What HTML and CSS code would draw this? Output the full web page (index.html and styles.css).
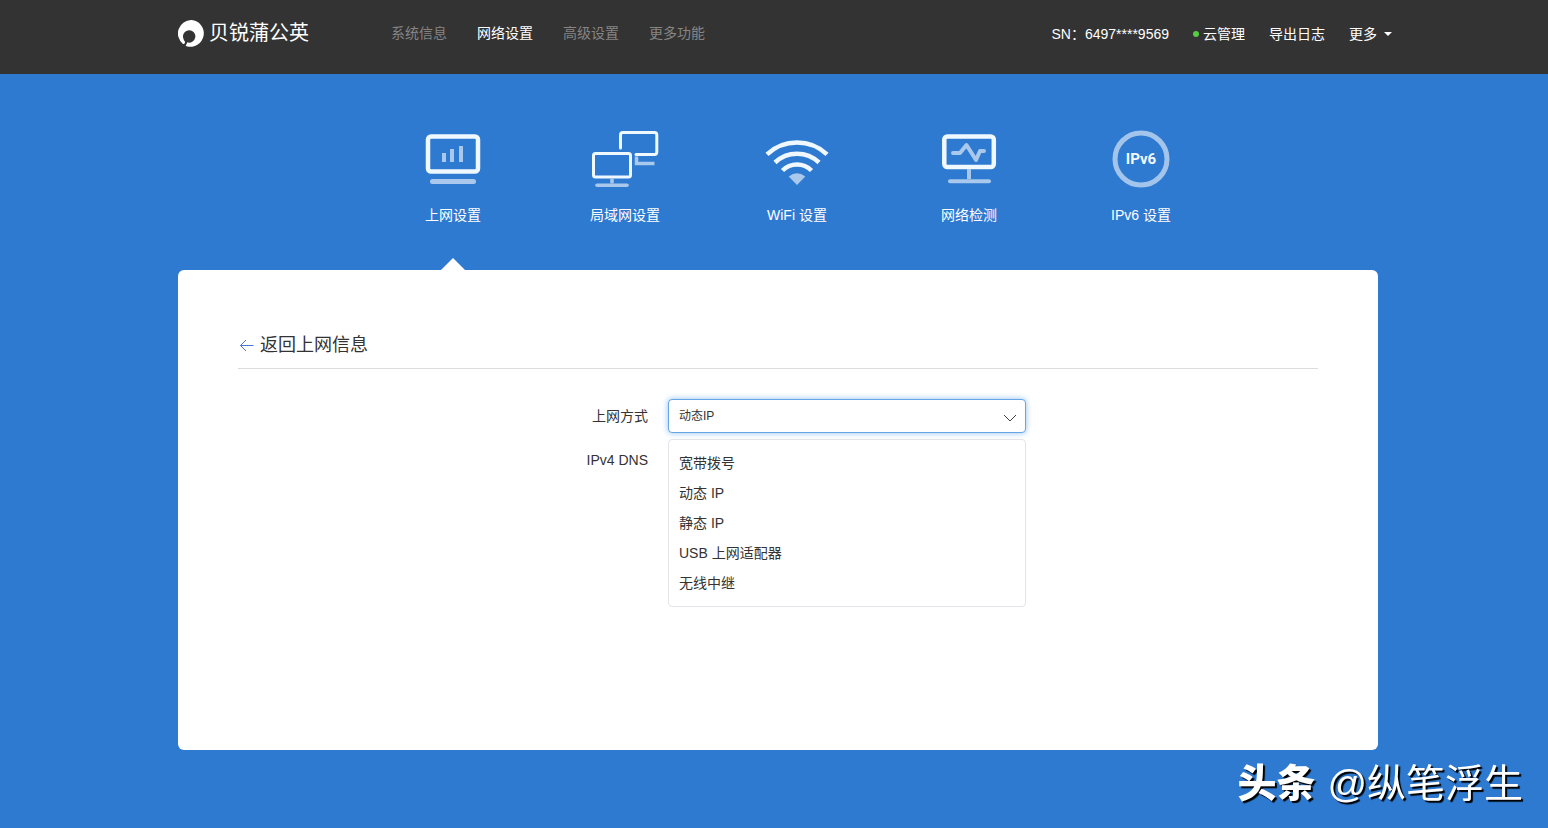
FILE: index.html
```html
<!DOCTYPE html>
<html lang="zh-CN">
<head>
<meta charset="utf-8">
<title>网络设置</title>
<link rel="stylesheet" href="styles.css">
</head>
<body>
<header class="topbar">
  <div class="container topbar-inner">
    <a class="brand" href="#">
      <svg class="brand-mark" viewBox="0 0 27 27" aria-hidden="true">
        <path fill="#fff" d="M13.5 0A13.4 13.4 0 1 1 8.600 26.200Q7 25.400 8.300 24.400Q9.300 23.200 9 22.200A6.200 6.200 0 1 0 5.200 18Q5.700 20.400 7 21.800Q7.200 24.300 5 23.900A13.400 13.400 0 0 1 13.500 0Z"/>
      </svg>
      <span>贝锐蒲公英</span>
    </a>
    <nav class="main-nav">
      <a href="#">系统信息</a>
      <a class="active" href="#">网络设置</a>
      <a href="#">高级设置</a>
      <a href="#">更多功能</a>
    </nav>
    <div class="tools">
      <span>SN：6497****9569</span>
      <a class="cloud" href="#">云管理</a>
      <a href="#">导出日志</a>
      <button class="more" type="button">更多</button>
    </div>
  </div>
</header>
<main class="page">
  <div class="container">
    <nav class="tabs">
      <a class="tab current" href="#">
        <svg viewBox="0 0 72 60" aria-hidden="true">
          <rect x="11" y="6.500" width="50" height="35" rx="3" class="frame" stroke-width="4.500"/>
          <path class="soft" stroke-width="4" d="M27 32v-9M35 32v-13M44 32v-16"/>
          <path class="soft round" stroke-width="5" d="M15.500 51.500h41"/>
        </svg>
        <span>上网设置</span>
      </a>
      <a class="tab" href="#">
        <svg viewBox="0 0 72 60" aria-hidden="true">
          <path class="frame" stroke-width="3" stroke-linecap="round" d="M31.500 18V5Q31.500 2.500 34 2.500H65.500Q67.800 2.500 67.800 5V22Q67.800 24.500 65.500 24.500H47"/>
          <path class="soft" stroke-width="3.500" stroke-linecap="butt" d="M47.500 26.500v7h18"/>
          <rect x="4.500" y="23.500" width="37" height="23.500" rx="2" class="frame" stroke-width="3"/>
          <path class="soft" stroke-width="3.500" d="M23 48.500v5"/>
          <path class="soft round" stroke-width="3.500" d="M8 55.200h30"/>
        </svg>
        <span>局域网设置</span>
      </a>
      <a class="tab" href="#">
        <svg viewBox="0 0 72 60" aria-hidden="true">
          <path class="frame" stroke-width="4.500" d="M6 24.300A44 44 0 0 1 66 24.300M14 32.500A32 32 0 0 1 58 32.500M21.500 40.500A20.500 20.500 0 0 1 50.500 40.500"/>
          <path fill="#a9c8ec" d="M27.700 46.500Q36 40 44.300 46.500L36 55Z"/>
        </svg>
        <span>WiFi 设置</span>
      </a>
      <a class="tab" href="#">
        <svg viewBox="0 0 72 60" aria-hidden="true">
          <rect x="11.300" y="6.500" width="49.500" height="30.500" rx="3" class="frame" stroke-width="4.500"/>
          <path class="soft round" stroke-width="4" d="M20 23h7l6.500-8 9.500 15 4-9h4"/>
          <path class="soft" stroke-width="4" d="M36 39v10"/>
          <path class="soft round" stroke-width="4" d="M17 51.200h39"/>
        </svg>
        <span>网络检测</span>
      </a>
      <a class="tab" href="#">
        <svg viewBox="0 0 72 60" aria-hidden="true">
          <circle cx="36" cy="29" r="26" stroke="#a4c5eb" stroke-width="5"/>
          <text class="badge-text" x="36" y="34" text-anchor="middle">IPv6</text>
        </svg>
        <span>IPv6 设置</span>
      </a>
    </nav>
    <section class="panel">
      <a class="back" href="#">
        <svg viewBox="0 0 16 16" aria-hidden="true"><path d="M15.500 8.500H2.500M8 3L2.500 8.500 8 14"/></svg>
        <span>返回上网信息</span>
      </a>
      <form class="form">
        <label for="mode">上网方式</label>
        <div class="field">
          <select id="mode">
            <option>动态IP</option>
          </select>
          <svg class="chevron" viewBox="0 0 14 8" aria-hidden="true"><path d="M1 1l6 6 6-6"/></svg>
          <ul class="menu" role="listbox" aria-label="上网方式">
            <li role="option">宽带拨号</li>
            <li role="option">动态 IP</li>
            <li role="option">静态 IP</li>
            <li role="option">USB 上网适配器</li>
            <li role="option">无线中继</li>
          </ul>
        </div>
        <span class="label">IPv4 DNS</span>
      </form>
    </section>
  </div>
</main>
<div class="credit"><strong>头条</strong><span>@纵笔浮生</span></div>
</body>
</html>
```

FILE: styles.css
```css
* { box-sizing: border-box; }
body {
  margin: 0;
  min-height: 100vh;
  background: #2e7ad1;
  color: #333;
  font: 14px/20px "Liberation Sans", "Noto Sans CJK SC", sans-serif;
}
a { color: inherit; text-decoration: none; }
.topbar, .page { padding-left: 8px; }
.container { max-width: 1200px; margin: 0 auto; }
.topbar { background: #333; }
.topbar-inner { display: flex; height: 74px; align-items: flex-start; }
.brand {
  display: flex;
  align-items: center;
  gap: 4px;
  width: 213px;
  height: 28px;
  margin-top: 19px;
  color: #fff;
  font-size: 20px;
  white-space: nowrap;
}
.brand-mark { width: 27px; height: 27px; }
.main-nav { display: flex; gap: 30px; margin-top: 23px; color: #858585; }
.main-nav .active { color: #fff; }
.tools {
  display: flex;
  gap: 24px;
  margin: 24px -14px 0 auto;
  color: #fff;
  white-space: nowrap;
}
.cloud { display: flex; align-items: center; gap: 4px; }
.cloud::before {
  content: "";
  width: 6px;
  height: 6px;
  border-radius: 50%;
  background: #5c4;
}
.more {
  display: flex;
  align-items: center;
  gap: 7px;
  padding: 0;
  border: 0;
  background: none;
  color: inherit;
  font: inherit;
}
.more::after {
  content: "";
  border: 4px solid transparent;
  border-top-color: #fff;
  border-bottom: 0;
}
.tabs { display: flex; height: 196px; padding: 56px 0 0 189px; }
.tab {
  display: flex;
  flex-direction: column;
  align-items: center;
  gap: 15px;
  width: 172px;
  position: relative;
  color: #fff;
}
.tab svg { width: 72px; height: 60px; fill: none; }
.current::after {
  content: "";
  position: absolute;
  bottom: 0;
  border: 12px solid transparent;
  border-top: 0;
  border-bottom-color: #fff;
}
.frame { stroke: #f0f8ff; }
.soft { stroke: #a9c8ec; }
.round { stroke-linecap: round; stroke-linejoin: round; }
.badge-text { fill: #f4faff; font: 700 15px Roboto, sans-serif; }
.panel {
  min-height: 480px;
  padding: 62px 60px;
  border-radius: 6px;
  background: #fff;
}
.back {
  display: flex;
  gap: 6px;
  align-items: center;
  height: 37px;
  padding-bottom: 10px;
  border-bottom: 1px solid #ddd;
  font-size: 18px;
}
.back svg { width: 16px; height: 16px; fill: none; stroke: #4875cf; }
.form {
  display: grid;
  grid-template-columns: 410px 358px;
  column-gap: 20px;
  row-gap: 10px;
  align-items: center;
  padding-top: 30px;
}
.form label, .form .label { line-height: 34px; text-align: right; }
.field { position: relative; }
.field select {
  display: block;
  width: 100%;
  height: 34px;
  padding: 0 10px;
  border: 1px solid #66a5e5;
  border-radius: 4px;
  outline: 0;
  box-shadow: 0 0 6px #8fc2f2;
  appearance: none;
  background: #fff;
  color: #333;
  font: inherit;
  font-size: 12px;
}
.chevron {
  position: absolute;
  top: 15px;
  right: 9px;
  width: 14px;
  height: 8px;
  fill: none;
  stroke: #444;
  pointer-events: none;
}
.menu {
  position: absolute;
  top: 40px;
  width: 100%;
  margin: 0;
  padding: 8px 10px;
  border: 1px solid #e3e4ea;
  border-radius: 4px;
  background: #fff;
  list-style: none;
  line-height: 30px;
}
.credit {
  position: fixed;
  right: 25px;
  bottom: 16px;
  display: flex;
  align-items: center;
  gap: 12px;
  color: #fff;
  font-size: 39px;
  line-height: 56px;
  text-shadow: 2px 2px 1px #000;
}
.credit strong { font-weight: 900; }
```
